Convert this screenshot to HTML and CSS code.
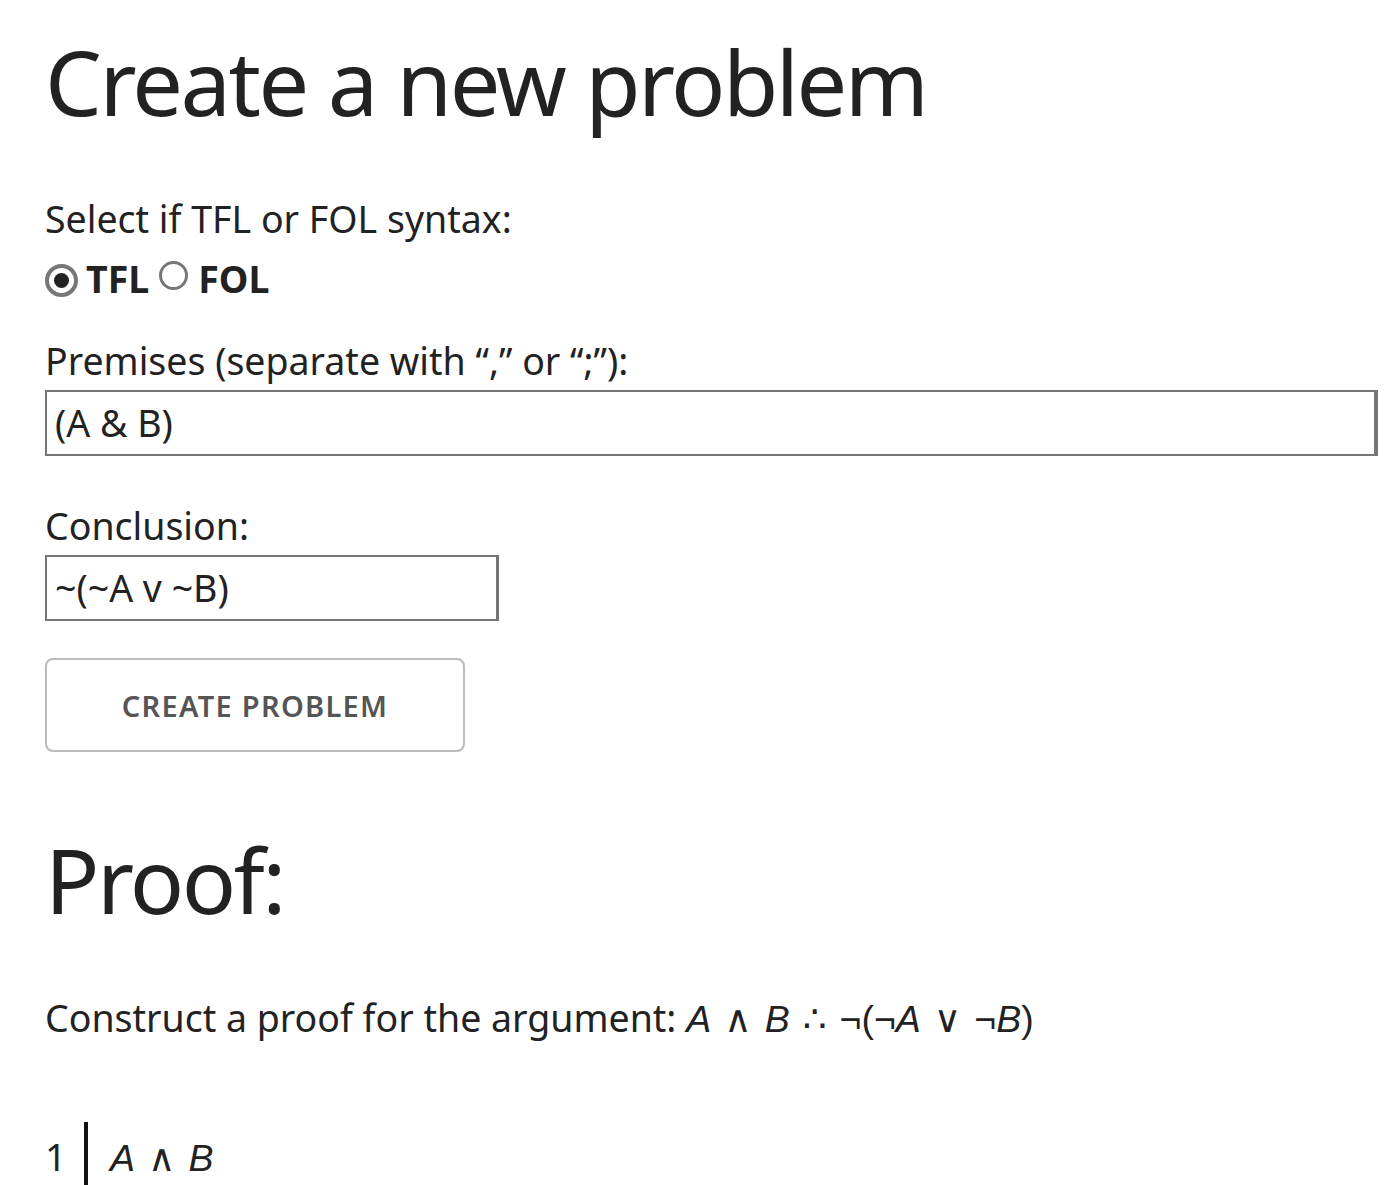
FILE: index.html
```html
<!DOCTYPE html>
<html>
<head>
<meta charset="utf-8">
<link rel="stylesheet" href="styles.css">
</head>
<body>
<div class="page">
  <h1 class="title">Create a new problem</h1>
  <div class="label first">Select if TFL or FOL syntax:</div>
  <div class="radios">
    <span class="radio checked"></span><span class="opt">TFL</span>
    <span class="radio second"></span><span class="opt fol">FOL</span>
  </div>
  <div class="label prem">Premises (separate with “,” or “;”):</div>
  <div class="input wide">(A &amp; B)</div>
  <div class="label concl">Conclusion:</div>
  <div class="input narrow">~(~A v ~B)</div>
  <button class="btn">CREATE PROBLEM</button>
  <h1 class="title proof">Proof:</h1>
  <p class="arg">Construct a proof for the argument: <span class="m"><i>A</i><span class="op">∧</span><i>B</i><span class="op">∴</span>¬(¬<i>A</i><span class="op">∨</span>¬<i>B</i>)</span></p>
  <div class="line">
    <span class="num">1</span>
    <span class="bar"></span>
    <span class="m formula"><i>A</i><span class="op">∧</span><i>B</i></span>
  </div>
</div>
</body>
</html>
```
FILE: styles.css
```css
html, body { margin: 0; padding: 0; background: #fff; }
body { font-family: "Noto Sans", "Open Sans", sans-serif; color: #222; overflow: hidden; }
.page { padding: 0 10px 0 45px; font-size: 37.5px; line-height: 1.5; }
.title { font-weight: 400; font-size: 90px; line-height: 1; letter-spacing: -2.5px; margin: 0; padding-top: 36px; }
.label.first { margin-top: 65px; }
.radios { display: flex; align-items: center; margin-top: 4px; }
.radio { border-radius: 50%; display: inline-flex; align-items: center; justify-content: center; box-sizing: border-box; }
.radio.checked { width: 33px; height: 33px; border: 4px solid #777; margin-top: 2px; }
.radio.checked::after { content: ""; width: 15px; height: 15px; background: #222; border-radius: 50%; }
.radio.second { width: 29px; height: 29px; border: 3px solid #777; margin-left: 10px; margin-bottom: 7px; }
.opt { font-weight: 700; margin-left: 8px; }
.opt.fol { margin-left: 10px; }
.label.prem { margin-top: 25px; }
.input { border: 2px solid #767676; border-right-width: 3px; height: 66px; box-sizing: border-box; padding: 0 8px; display: flex; align-items: center; margin-top: 1px; }
.wide { width: 1333px; border-right-width: 4px; }
.narrow { width: 454px; }
.label.concl { margin-top: 42px; }
.btn { display: block; margin-top: 37px; width: 420px; height: 94px; background: #fff; border: 2px solid #bbb; border-radius: 8px; font-family: inherit; font-size: 29px; letter-spacing: 1.3px; color: #555; font-weight: 600; padding: 0; }
.proof { padding-top: 82px; }
.arg { margin: 66px 0 0; }
.m { font-family: "Liberation Sans", "DejaVu Sans", sans-serif; font-size: 37.5px; }
.m i { font-style: italic; }
.op { margin: 0 13px; }
.line { display: flex; align-items: flex-start; margin-top: 75px; }
.num { margin-top: 7px; width: 39px; }
.bar { width: 4px; height: 70px; background: #111; margin-right: 22px; }
.formula { margin-top: 8px; }
```
